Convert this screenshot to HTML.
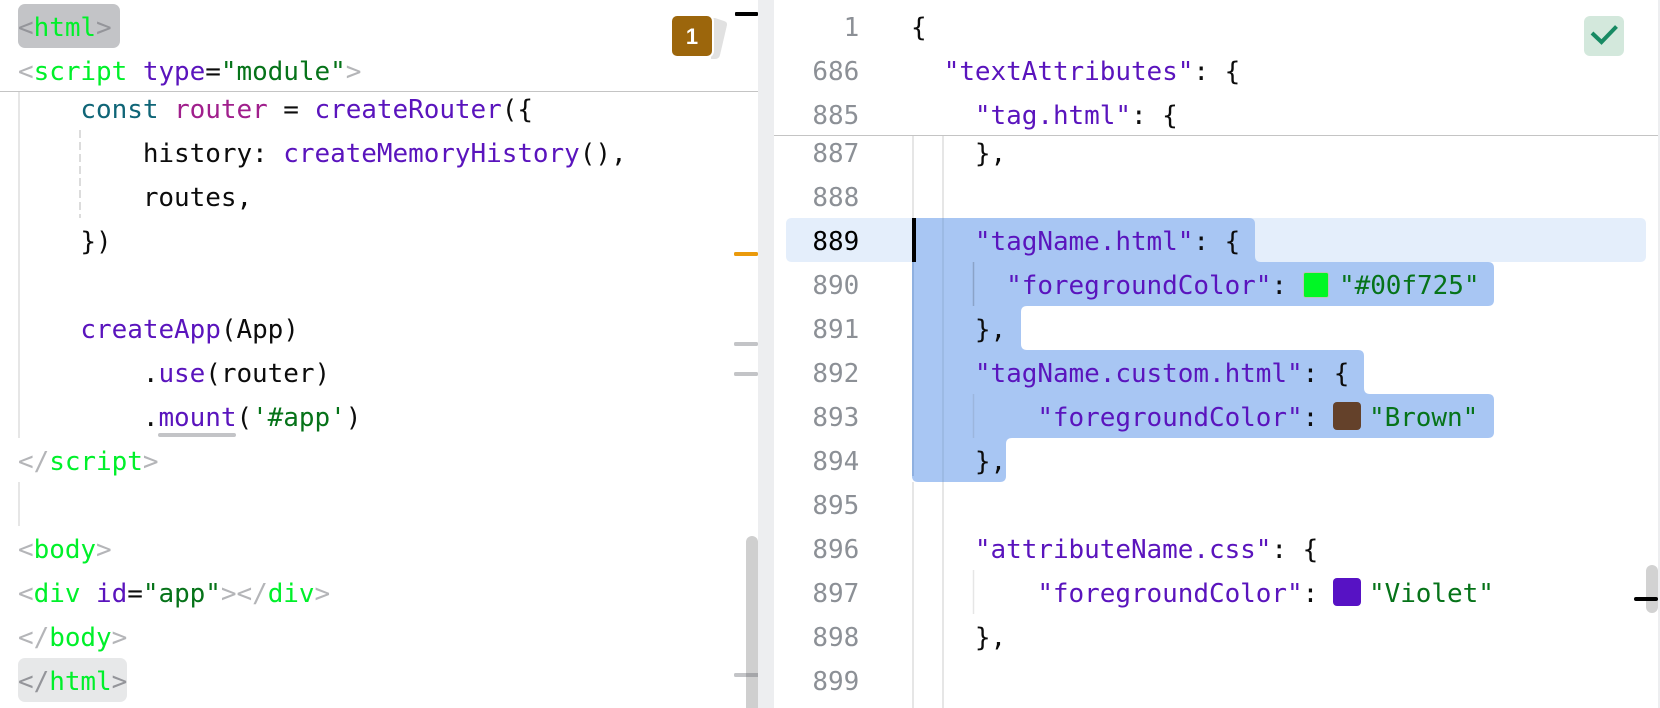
<!DOCTYPE html>
<html lang="en"><head><meta charset="utf-8"><title>Editor</title>
<style>
html,body{margin:0;padding:0;background:#fff}
#r{position:relative;width:1660px;height:708px;overflow:hidden;background:#fff;font-family:"DejaVu Sans Mono","Liberation Mono",monospace;font-size:26px;letter-spacing:-.05px;color:#0c0c0c}
.l{position:absolute;white-space:pre;line-height:44px;height:44px;margin-top:2px}
.b{position:absolute}
.n{position:absolute;left:780px;width:79.2px;text-align:right;line-height:44px;height:44px;margin-top:2px;color:#8c9096}
.g{color:#b4b5b8}.t{color:#00f02a}.a{color:#5a14bd}.s{color:#067319}.k{color:#0f6577}.m{color:#a01f8c}
.d{color:#94959a}
</style></head><body><div id="r">
<div class="b" style="left:758px;top:0;width:16px;height:708px;background:#edeef0"></div>
<div class="b" style="left:1658px;top:0;width:2px;height:708px;background:#edeef0"></div>
<div class="b" style="left:18px;top:4px;width:102px;height:44px;border-radius:7px;background:#c3c4c7"></div>
<div class="b" style="left:18px;top:658px;width:109px;height:44px;border-radius:7px;background:#e7e8e9"></div>
<div class="b" style="left:0;top:91px;width:758px;height:1px;background:#c4c4c4"></div>
<div class="b" style="left:774px;top:135px;width:884px;height:1px;background:#c4c4c4"></div>
<div class="b" style="left:18px;top:92px;width:2px;height:346px;background:#e6e6e6"></div>
<div class="b" style="left:18px;top:482px;width:2px;height:44px;background:#e6e6e6"></div>
<svg class="b" style="left:0;top:0" width="1660" height="708">
<line x1="80" y1="130" x2="80" y2="218" stroke="#dcdcdc" stroke-width="2" stroke-dasharray="8 4"/>
<path d="M786 224q0-6 6-6H912V262H792q-6 0-6-6Z" fill="#e4eefb"/>
<path d="M1250 218H1640q6 0 6 6V256q0 6-6 6H1250Z" fill="#e4eefb"/>
<path d="M912 218H1249q6 0 6 6V256q0 6 6 6H1488q6 0 6 6V300q0 6-6 6H1027q-6 0-6 6V344q0 6 6 6H1358q6 0 6 6V388q0 6 6 6H1488q6 0 6 6V432q0 6-6 6H1012q-6 0-6 6V476q0 6-6 6H918q-6 0-6-6Z" fill="#a8c6f3"/>
<line x1="913" y1="136" x2="913" y2="218" stroke="#e6e6e6" stroke-width="2"/>
<line x1="913" y1="262" x2="913" y2="476" stroke="#8fb0e0" stroke-width="2"/>
<line x1="913" y1="482" x2="913" y2="708" stroke="#e6e6e6" stroke-width="2"/>
<line x1="943" y1="136" x2="943" y2="218" stroke="#e6e6e6" stroke-width="2"/>
<line x1="943" y1="218" x2="943" y2="482" stroke="#98b5e0" stroke-width="1.5"/>
<line x1="943" y1="482" x2="943" y2="708" stroke="#e6e6e6" stroke-width="2"/>
<line x1="973.5" y1="262" x2="973.5" y2="306" stroke="#8ba3c8" stroke-width="1.5"/>
<line x1="973.5" y1="394" x2="973.5" y2="438" stroke="#9cb6dd" stroke-width="1.5"/>
<line x1="973.5" y1="570" x2="973.5" y2="614" stroke="#e6e6e6" stroke-width="1.5"/>
<path d="M711 18H715L724 21Q727.500 22 727 25L720 55Q719 59 715 59H711Z" fill="#e1e1e1"/>
<rect x="670" y="14" width="44" height="44" rx="7" fill="#fff"/>
<rect x="672" y="16" width="40" height="40" rx="5" fill="#9c660c"/>
<rect x="1584" y="16" width="40" height="40" rx="6" fill="#d3e8dc"/>
<path d="M1592 33L1601.500 42L1616.500 26.500" fill="none" stroke="#178a63" stroke-width="4"/>
<rect x="735" y="12" width="23" height="4" rx="1" fill="#000"/>
<rect x="734" y="252" width="24" height="4" rx="1.500" fill="#ea9a0c"/>
<rect x="734" y="342" width="24" height="4" rx="1.500" fill="#c3c4c7"/>
<rect x="734" y="372" width="24" height="4" rx="1.500" fill="#c3c4c7"/>
<path d="M746 708V542a6 6 0 0 1 12 0V708Z" fill="#cfcfcf"/>
<rect x="734" y="673" width="24" height="4" rx="1.500" fill="#c3c4c7"/>
<rect x="746" y="673" width="12" height="4" fill="#a5a6a9"/>
<rect x="1646" y="565" width="12" height="48" rx="6" fill="#d2d2d2"/>
<rect x="1634" y="597" width="24" height="4" rx="2" fill="#000"/>
<rect x="912" y="218" width="4" height="44" fill="#000"/>
<rect x="158" y="433" width="78" height="4" rx="2" fill="#c3c4c7"/>
<rect x="1303.500" y="272.500" width="25" height="25" rx="2" fill="#00f725" stroke="#b9c2b9"/>
<rect x="1333" y="402" width="28" height="28" rx="4" fill="#64412a"/>
<rect x="1333" y="578" width="28" height="28" rx="4" fill="#5712c4"/>
</svg>
<div class="b" style="left:672px;top:17px;width:40px;height:40px;text-align:center;color:#fff;font:bold 22px/40px 'Liberation Sans',sans-serif">1</div>

<div class="l" style="left:18px;top:4px"><span class="d">&lt;</span><span class="t">html</span><span class="d">&gt;</span></div>
<div class="l" style="left:18px;top:48px"><span class="g">&lt;</span><span class="t">script</span> <span class="a">type</span>=<span class="s">"module"</span><span class="g">&gt;</span></div>
<div class="l" style="left:18px;top:86px">    <span class="k">const</span> <span class="m">router</span> = <span class="a">createRouter</span>({</div>
<div class="l" style="left:18px;top:130px">        history: <span class="a">createMemoryHistory</span>(),</div>
<div class="l" style="left:18px;top:174px">        routes,</div>
<div class="l" style="left:18px;top:218px">    })</div>
<div class="l" style="left:18px;top:306px">    <span class="a">createApp</span>(App)</div>
<div class="l" style="left:18px;top:350px">        .<span class="a">use</span>(router)</div>
<div class="l" style="left:18px;top:394px">        .<span class="a">mount</span>(<span class="s">'#app'</span>)</div>
<div class="l" style="left:18px;top:438px"><span class="g">&lt;/</span><span class="t">script</span><span class="g">&gt;</span></div>
<div class="l" style="left:18px;top:526px"><span class="g">&lt;</span><span class="t">body</span><span class="g">&gt;</span></div>
<div class="l" style="left:18px;top:570px"><span class="g">&lt;</span><span class="t">div</span> <span class="a">id</span>=<span class="s">"app"</span><span class="g">&gt;&lt;/</span><span class="t">div</span><span class="g">&gt;</span></div>
<div class="l" style="left:18px;top:614px"><span class="g">&lt;/</span><span class="t">body</span><span class="g">&gt;</span></div>
<div class="l" style="left:18px;top:658px"><span class="d">&lt;/</span><span class="t">html</span><span class="d">&gt;</span></div>

<div class="n" style="top:4px">1</div>
<div class="n" style="top:48px">686</div>
<div class="n" style="top:92px">885</div>
<div class="n" style="top:130px">887</div>
<div class="n" style="top:174px">888</div>
<div class="n" style="top:218px;color:#000">889</div>
<div class="n" style="top:262px">890</div>
<div class="n" style="top:306px">891</div>
<div class="n" style="top:350px">892</div>
<div class="n" style="top:394px">893</div>
<div class="n" style="top:438px">894</div>
<div class="n" style="top:482px">895</div>
<div class="n" style="top:526px">896</div>
<div class="n" style="top:570px">897</div>
<div class="n" style="top:614px">898</div>
<div class="n" style="top:658px">899</div>

<div class="l" style="left:911px;top:4px">{</div>
<div class="l" style="left:912.500px;top:48px">  <span class="a">"textAttributes"</span>: {</div>
<div class="l" style="left:912.500px;top:92px">    <span class="a">"tag.html"</span>: {</div>
<div class="l" style="left:912.500px;top:130px">    },</div>
<div class="l" style="left:912.500px;top:218px">    <span class="a">"tagName.html"</span>: {</div>
<div class="l" style="left:912.500px;top:262px">      <span class="a">"foregroundColor"</span>:</div>
<div class="l s" style="left:1339px;top:262px">"#00f725"</div>
<div class="l" style="left:912.500px;top:306px">    },</div>
<div class="l" style="left:912.500px;top:350px">    <span class="a">"tagName.custom.html"</span>: {</div>
<div class="l" style="left:912.500px;top:394px">        <span class="a">"foregroundColor"</span>:</div>
<div class="l s" style="left:1369px;top:394px">"Brown"</div>
<div class="l" style="left:912.500px;top:438px">    },</div>
<div class="l" style="left:912.500px;top:526px">    <span class="a">"attributeName.css"</span>: {</div>
<div class="l" style="left:912.500px;top:570px">        <span class="a">"foregroundColor"</span>:</div>
<div class="l s" style="left:1369px;top:570px">"Violet"</div>
<div class="l" style="left:912.500px;top:614px">    },</div>
</div></body></html>
